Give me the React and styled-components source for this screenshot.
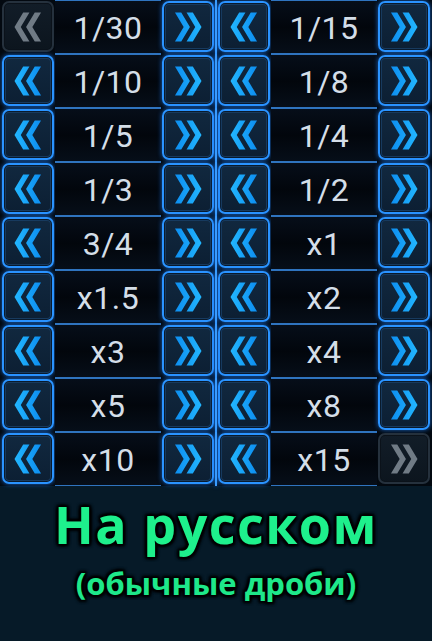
import React from "react";
import styled, { createGlobalStyle, css } from "styled-components";

const Global = createGlobalStyle`
  html, body { margin: 0; padding: 0; background: #061a28; }
  body { font-family: "Roboto", "Noto Sans", sans-serif; }
  #root { width: 432px; height: 641px; overflow: hidden; }
`;

const Page = styled.div`
  width: 432px;
  height: 641px;
  display: flex;
  flex-direction: column;
  background: #061a28;
`;

const Grid = styled.div`
  display: grid;
  grid-template-columns: 216px 216px;
  grid-auto-rows: 54px;
  background: #030910;
`;

const Cell = styled.div`
  display: flex;
  align-items: stretch;
  padding: 1px 2px 2px 2px;
  box-sizing: border-box;
  position: relative;
  ${(p) =>
    p.$right &&
    css`
      &::before {
        content: "";
        position: absolute;
        left: -1px;
        top: 0;
        bottom: 0;
        width: 2px;
        background: #3a9cff;
        box-shadow: 0 0 4px #1f7fff;
      }
    `}
`;

const Button = styled.div`
  width: 52px;
  flex: 0 0 52px;
  box-sizing: border-box;
  border-radius: 7px;
  display: flex;
  align-items: center;
  justify-content: center;
  ${(p) =>
    p.$disabled
      ? css`
          border: 2px solid #25313d;
          background: linear-gradient(180deg, #121d28 0%, #0c151e 100%);
          box-shadow: inset 0 0 0 1px #0b121a;
        `
      : css`
          border: 2px solid #2a93ff;
          background: linear-gradient(180deg, #11283f 0%, #0c1f33 100%);
          box-shadow: 0 0 5px rgba(30, 130, 255, 0.75), inset 0 0 0 1px #0a1a2b,
            inset 0 0 0 2px #173a5e;
        `}
`;

const Label = styled.div`
  flex: 1;
  display: flex;
  align-items: center;
  justify-content: center;
  margin: -1px 1px -2px 1px;
  border-top: 1px solid #2f74bf;
  border-bottom: 1px solid #2f74bf;
  background: linear-gradient(180deg, #060e19 0%, #02060c 50%, #060e19 100%);
  color: #d4dee8;
  font-family: "Roboto", "Noto Sans", sans-serif;
  font-size: 32px;
  font-weight: 400;
  letter-spacing: 0.5px;
  padding-top: 2px;
`;

const Footer = styled.div`
  flex: 1;
  display: flex;
  flex-direction: column;
  align-items: center;
  padding-top: 8px;
  background: #061a28;
`;

const outline = css`
  text-shadow: 0 0 2px #000, 0 0 3px #000, 0 0 4px #000, 2px 2px 3px #000,
    -2px -2px 3px #000, 2px -2px 3px #000, -2px 2px 3px #000;
`;

const Title = styled.div`
  color: #1ef08c;
  font-family: "Open Sans", "Noto Sans", sans-serif;
  font-weight: 700;
  font-size: 52px;
  line-height: 60px;
  letter-spacing: 1.5px;
  ${outline}
`;

const Subtitle = styled.div`
  color: #1ee88a;
  font-family: "Open Sans", "Noto Sans", sans-serif;
  font-weight: 700;
  font-size: 31px;
  line-height: 40px;
  margin-top: 9px;
  ${outline}
`;

const Chevrons = ({ dir, disabled }) => {
  const fill = disabled ? "#707b85" : "url(#cg)";
  const left =
    "M9.5 0 L16 0 L7 15 L16 30 L9.5 30 L0.5 15 Z M21.5 0 L28 0 L19 15 L28 30 L21.5 30 L12.5 15 Z";
  return (
    <svg
      width="28"
      height="30"
      viewBox="0 0 29 30"
      style={dir === "right" ? { transform: "scaleX(-1)" } : undefined}
    >
      <defs>
        <linearGradient id="cg" x1="0" y1="0" x2="1" y2="0">
          <stop offset="0" stopColor="#22b6ff" />
          <stop offset="1" stopColor="#0d8ef0" />
        </linearGradient>
      </defs>
      <path d={left} fill={fill} />
    </svg>
  );
};

const rows = [
  ["1/30", "1/15"],
  ["1/10", "1/8"],
  ["1/5", "1/4"],
  ["1/3", "1/2"],
  ["3/4", "x1"],
  ["x1.5", "x2"],
  ["x3", "x4"],
  ["x5", "x8"],
  ["x10", "x15"],
];

export default function App() {
  const items = [];
  rows.forEach((r, ri) => {
    r.forEach((val, ci) => {
      const first = ri === 0 && ci === 0;
      const last = ri === rows.length - 1 && ci === 1;
      items.push(
        <Cell key={`${ri}-${ci}`} $right={ci === 1}>
          <Button $disabled={first}>
            <Chevrons dir="left" disabled={first} />
          </Button>
          <Label>{val}</Label>
          <Button $disabled={last}>
            <Chevrons dir="right" disabled={last} />
          </Button>
        </Cell>
      );
    });
  });
  return (
    <>
      <Global />
      <Page>
        <Grid>{items}</Grid>
        <Footer>
          <Title>На русском</Title>
          <Subtitle>(обычные дроби)</Subtitle>
        </Footer>
      </Page>
    </>
  );
}
